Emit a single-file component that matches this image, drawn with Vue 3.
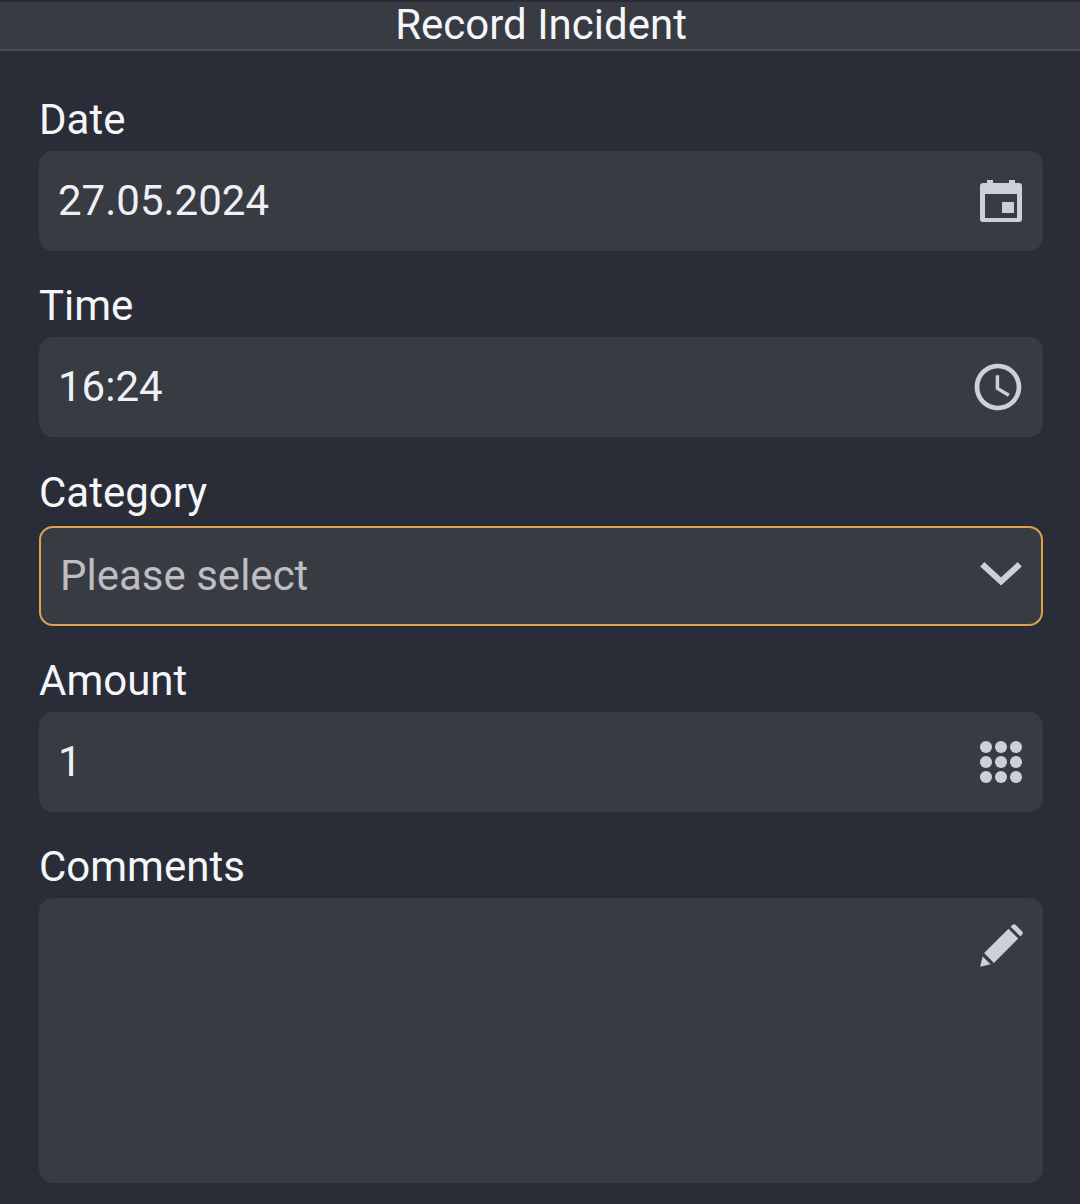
<template>
  <div class="screen">
    <div class="top-bar">Record Incident</div>

    <div class="form">
      <div class="field">
        <label class="field-label">Date</label>
        <div class="field-box">
          <span class="field-value">27.05.2024</span>
          <svg class="field-icon icon-calendar" viewBox="0 0 42 42" fill="currentColor">
            <path fill-rule="evenodd" d="M7 0h6v3h16V0h6v3h4a3 3 0 0 1 3 3v33a3 3 0 0 1-3 3H3a3 3 0 0 1-3-3V6a3 3 0 0 1 3-3h4zM5 14v24h32V14z"/>
            <rect x="22" y="22" width="12" height="11"/>
          </svg>
        </div>
      </div>

      <div class="field">
        <label class="field-label">Time</label>
        <div class="field-box">
          <span class="field-value">16:24</span>
          <svg class="field-icon icon-large" viewBox="0 0 24 24" fill="currentColor">
            <path d="M11.99 2C6.47 2 2 6.48 2 12s4.47 10 9.99 10C17.52 22 22 17.52 22 12S17.52 2 11.99 2zM12 20c-4.42 0-8-3.58-8-8s3.58-8 8-8 8 3.58 8 8-3.58 8-8 8zm.5-13H11v6l5.25 3.15.75-1.23-4.5-2.67V7z"/>
          </svg>
        </div>
      </div>

      <div class="field field-category">
        <label class="field-label">Category</label>
        <div class="field-box field-box-active">
          <span class="field-value placeholder">Please select</span>
          <svg class="field-icon" viewBox="0 0 24 24" fill="none" stroke="currentColor" stroke-width="2.9" stroke-linecap="butt">
            <polyline points="3 6.4 12 14.6 21 6.4"/>
          </svg>
        </div>
      </div>

      <div class="field">
        <label class="field-label">Amount</label>
        <div class="field-box">
          <span class="field-value">1</span>
          <svg class="field-icon" viewBox="0 0 24 24" fill="currentColor">
            <circle v-for="dot in dots" :key="dot.x + '-' + dot.y" :cx="dot.x" :cy="dot.y" r="2.9"/>
          </svg>
        </div>
      </div>

      <div class="field">
        <label class="field-label">Comments</label>
        <div class="field-box field-box-area">
          <svg class="field-icon" viewBox="0 0 24 24" fill="currentColor">
            <path d="M2 22l1.2-5 3.8 3.8z"/>
            <path d="M3.9 15.4 15.6 3.7l4.7 4.7L8.6 20.1z"/>
            <path d="M16.6 2.7l.8-.8c.5-.5 1.2-.5 1.7 0l3 3c.5.5.5 1.2 0 1.7l-.8.8z"/>
          </svg>
        </div>
      </div>
    </div>
  </div>
</template>

<script setup>
const dots = []
for (const y of [4.8, 12, 19.2]) {
  for (const x of [4.8, 12, 19.2]) {
    dots.push({ x, y })
  }
}
</script>

<style>
html,
body {
  margin: 0;
  background: #2a2d37;
}
</style>

<style scoped>
.screen {
  width: 1080px;
  height: 1204px;
  overflow: hidden;
  background: #2a2d37;
  color: #f4f6f9;
  font-family: Roboto, "Liberation Sans", sans-serif;
}

.top-bar {
  height: 47px;
  margin-top: 2px;
  padding-left: 2px;
  border-bottom: 2px solid #4a4d56;
  background: #383b42;
  text-align: center;
  font-size: 42px;
  line-height: 46px;
}

.form {
  display: flex;
  flex-direction: column;
  padding: 0 37px 0 39px;
}

.field-label {
  display: block;
  height: 86px;
  padding-top: 30px;
  box-sizing: border-box;
  font-size: 42px;
  line-height: 50px;
}

.field:first-child .field-label {
  height: 100px;
  padding-top: 44px;
}

.field-category .field-label {
  height: 89px;
  padding-top: 31px;
}

.field-box {
  display: flex;
  align-items: center;
  justify-content: space-between;
  height: 100px;
  padding: 0 17px 2px 19px;
  box-sizing: border-box;
  border-radius: 14px;
  background: #383b42;
}

.field-box-active {
  border: 2px solid #dba350;
  padding: 0 15px 2px 19px;
}

.field-box-area {
  height: 285px;
  align-items: flex-start;
  justify-content: flex-end;
  padding-top: 23px;
}

.field-value {
  font-size: 42px;
  color: #eef0f5;
}

.placeholder {
  color: #bcbec4;
}

.field-icon {
  width: 50px;
  height: 50px;
  margin-bottom: -2px;
  color: #ccd0d8;
  flex-shrink: 0;
}

.icon-large {
  width: 56px;
  height: 56px;
}

.icon-calendar {
  width: 42px;
  height: 42px;
  margin-right: 4px;
}

.field-box-area .field-icon {
  margin-bottom: 0;
}
</style>
